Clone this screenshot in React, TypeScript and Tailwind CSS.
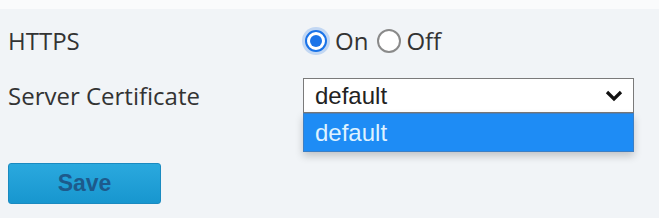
import React from "react";

export default function App() {
  return (
    <div className="w-[659px] h-[218px] bg-[#f1f4f7] relative overflow-hidden" style={{ fontFamily: '"Open Sans", "Noto Sans", sans-serif' }}>
      <div className="h-[9px] bg-[#fafbfc]" />
      <div className="px-[8px] pt-[12px]">
        <div className="flex items-center h-[40px]">
          <div className="w-[295px] text-[24px] text-[#333]">HTTPS</div>
          <div className="flex items-center text-[24px] text-[#333]">
            <span className="ml-[2px] w-[22px] h-[22px] rounded-full border-[2px] border-[#1a73e8] bg-white flex items-center justify-center shadow-[0_0_0_3px_rgba(26,115,232,0.22)]">
              <span className="w-[12px] h-[12px] rounded-full bg-[#1a73e8]" />
            </span>
            <span className="ml-[8px]">On</span>
            <span className="ml-[9px] w-[24px] h-[24px] rounded-full border-[2px] border-[#8a8a8a] bg-white" />
            <span className="ml-[5px]">Off</span>
          </div>
        </div>
        <div className="flex items-center mt-[17px] h-[35px]">
          <div className="w-[295px] text-[24px] text-[#333]">Server Certificate</div>
          <div className="relative w-[331px] h-[35px]" style={{ fontFamily: '"Liberation Sans", Arial, sans-serif' }}>
            <div className="w-full h-full border border-[#7a7a7a] bg-white flex items-center pl-[11px] pr-[10px] text-[24px] text-[#222]">
              <span className="flex-1">default</span>
              <svg width="18" height="12" viewBox="0 0 18 12">
                <path d="M2 2 L9 9 L16 2" fill="none" stroke="#111" strokeWidth="3.2" />
              </svg>
            </div>
            <div className="absolute left-0 top-[35px] w-full h-[39px] bg-[#1e8cf5] border border-[#3d7fc4] flex items-center pl-[11px] text-[24px] text-[#dff2ff] shadow-[0_4px_8px_rgba(0,0,0,0.2)]">
              default
            </div>
          </div>
        </div>
        <div className="mt-[50px]">
          <button className="w-[153px] h-[41px] rounded-[3px] bg-gradient-to-b from-[#2aa9de] to-[#1796cf] border border-[#1a8ac0] text-[#1d5a8c] font-bold text-[23px] flex items-center justify-center" style={{ fontFamily: '"Liberation Sans", Arial, sans-serif' }}>
            Save
          </button>
        </div>
      </div>
    </div>
  );
}
